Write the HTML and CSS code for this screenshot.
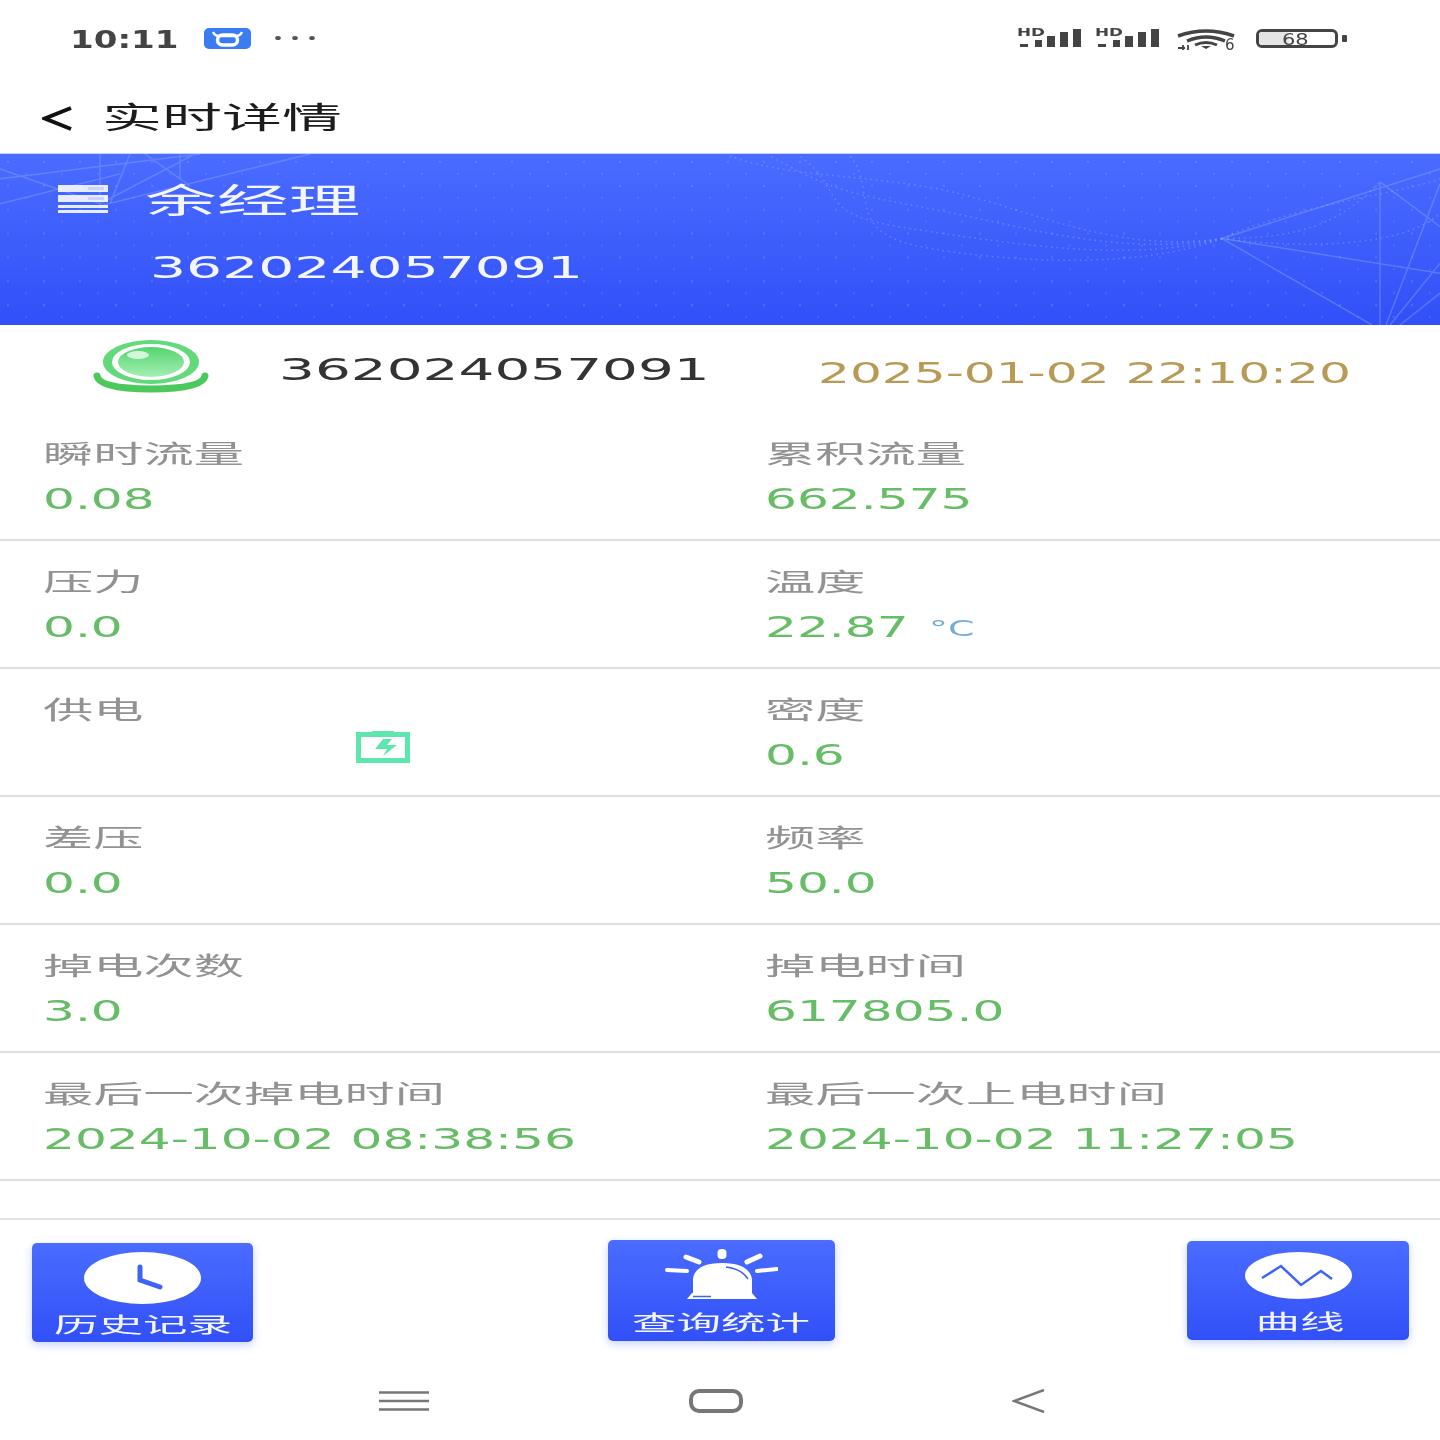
FILE: index.html
```html
<!DOCTYPE html>
<html lang="zh">
<head>
<meta charset="utf-8">
<title>实时详情</title>
<link rel="stylesheet" href="styles.css">
</head>
<body>
<div class="page">
  <header class="status">
    <div class="status-left">
      <span class="wide time">10:11</span>
      <svg class="app-icon" viewBox="0 0 47 21"><rect width="47" height="21" rx="5" fill="#3a7cf2"/><path d="M9 4q2 4 6 4h17q4 0 6-4" fill="none" stroke="#fff" stroke-width="2.500"/><rect x="13.500" y="7" width="20" height="10" rx="5" fill="none" stroke="#fff" stroke-width="3.500"/></svg>
      <svg class="dots" viewBox="0 0 40 6"><ellipse cx="3" cy="3" rx="2.800" ry="2"/><ellipse cx="20" cy="3" rx="2.800" ry="2"/><ellipse cx="37" cy="3" rx="2.800" ry="2"/></svg>
    </div>
    <div class="status-right">
      <svg class="signal" viewBox="0 0 65 20"><text x="0" y="9" class="hd" textLength="28" lengthAdjust="spacingAndGlyphs">HD</text><path d="M3 17h8v3H3zM18 13h7v7h-7zM30 9h8v11h-8zM43 5h8v15h-8zM56 2h8v18h-8z" fill="#444"/></svg>
      <svg class="signal" viewBox="0 0 65 20"><text x="0" y="9" class="hd" textLength="28" lengthAdjust="spacingAndGlyphs">HD</text><path d="M3 17h8v3H3zM18 13h7v7h-7zM30 9h8v11h-8zM43 5h8v15h-8zM56 2h8v18h-8z" fill="#444"/></svg>
      <svg class="wifi" viewBox="0 0 61 24"><path d="M1 9Q29-1 57 9" fill="none" stroke="#444" stroke-width="3.500"/><path d="M10 14Q29 6 48 14" fill="none" stroke="#444" stroke-width="3.500"/><path d="M18 18Q29 13 40 18" fill="none" stroke="#444" stroke-width="3"/><path d="M24 19h10l-5 3z" fill="#444"/><path d="M1 21h7M11 18v5M6 18v5" stroke="#444" stroke-width="1.800"/><text x="48" y="23" class="wifi-six">6</text></svg>
      <div class="battery"><span class="battery-fill"></span><span class="wide battery-num">68</span></div>
      <span class="battery-tip"></span>
    </div>
  </header>

  <div class="titlebar">
    <svg class="back" viewBox="0 0 31 25"><path d="M29 2 3 12.500 29 23" fill="none" stroke="#111" stroke-width="4"/></svg>
    <span class="wide title">实时详情</span>
  </div>

  <section class="banner">
    <svg class="banner-art" viewBox="0 0 1440 172" preserveAspectRatio="none">
      <defs><pattern id="dots" width="36" height="24" patternUnits="userSpaceOnUse"><circle cx="8" cy="8" r="1" fill="#8ea4ff" fill-opacity=".4"/><circle cx="26" cy="20" r="1" fill="#8ea4ff" fill-opacity=".3"/></pattern></defs>
      <rect width="1440" height="172" fill="url(#dots)"/>
      <g fill="none" stroke="#9fb2ff" stroke-opacity=".35" stroke-width="1.500">
        <path d="M0 15 100 50 195 0M0 50 120 20M100 0v55M130 0l-20 50M145 0l45 32M180 0v25M0 25 200 0 M100 52 310 0"/>
        <path d="M1222 85 1440 15M1222 85 1440 120M1222 85 1372 172M1380 28v144M1380 28l60 45M1386 172 1440 30M1390 172 1440 110M1400 172 1440 140"/>
      </g>
      <g fill="none" stroke="#a9b9ff" stroke-opacity=".4" stroke-width="1.500" stroke-dasharray="1.500 4">
        <path d="M1222 85C1120 100 1040 60 960 40S790 25 730 2"/>
        <path d="M1222 85C1120 104 1020 72 930 55S830 35 770 2"/>
        <path d="M1222 85C1130 110 1010 90 910 75S850 40 800 2"/>
        <path d="M1222 85C1140 115 1020 110 930 95S880 40 850 2"/>
        <path d="M1222 85C1300 85 1340 70 1380 28M1222 85C1300 95 1400 95 1440 60M1222 85C1300 50 1400 40 1440 25"/>
      </g>
    </svg>
    <div class="banner-row">
      <svg class="server" viewBox="0 0 50 28"><path d="M0 0h50v7H0zM0 10h50v7H0zM0 20h50v3H0zM0 25h50v3H0z" fill="#fff" fill-opacity=".88"/><path d="M30 2h16v3H30zM30 12h16v3H30z" fill="#c8d3ff"/></svg>
      <span class="wide banner-name">余经理</span>
    </div>
    <span class="wide banner-id">362024057091</span>
  </section>

  <div class="device">
    <svg class="cam" viewBox="0 0 116 53"><defs><linearGradient id="camg" x1="0" y1="0" x2="0" y2="1"><stop offset="0" stop-color="#54d56f"/><stop offset="1" stop-color="#a5eeb3"/></linearGradient></defs><path d="M4 36Q6 49 58 49T112 36" fill="none" stroke="#4cc95b" stroke-width="7" stroke-linecap="round"/><ellipse cx="58" cy="22" rx="48" ry="22" fill="#62d97b"/><ellipse cx="58" cy="22" rx="39" ry="18" fill="#fff"/><ellipse cx="58" cy="22" rx="33" ry="15" fill="url(#camg)"/><ellipse cx="45" cy="15" rx="11" ry="4" fill="#d3f7db"/></svg>
    <span class="wide device-id">362024057091</span>
    <span class="wide device-time">2025-01-02 22:10:20</span>
  </div>

  <main class="grid">
    <div class="cell"><span class="wide label">瞬时流量</span><div class="value-row"><span class="wide value">0.08</span></div></div>
    <div class="cell"><span class="wide label">累积流量</span><div class="value-row"><span class="wide value">662.575</span></div></div>
    <div class="cell"><span class="wide label">压力</span><div class="value-row"><span class="wide value">0.0</span></div></div>
    <div class="cell"><span class="wide label">温度</span><div class="value-row"><span class="wide value">22.87</span><span class="wide unit">°C</span></div></div>
    <div class="cell"><span class="wide label">供电</span><div class="value-row"><svg class="power" viewBox="0 0 54 32"><path d="M16 0h22v3H16z" fill="#5fe6ae"/><rect x="2.500" y="3.500" width="49" height="26" fill="none" stroke="#5fe6ae" stroke-width="5"/><path d="M27 8h9l-5 6h10L27 25l4-7H19z" fill="#5fe6ae"/></svg></div></div>
    <div class="cell"><span class="wide label">密度</span><div class="value-row"><span class="wide value">0.6</span></div></div>
    <div class="cell"><span class="wide label">差压</span><div class="value-row"><span class="wide value">0.0</span></div></div>
    <div class="cell"><span class="wide label">频率</span><div class="value-row"><span class="wide value">50.0</span></div></div>
    <div class="cell"><span class="wide label">掉电次数</span><div class="value-row"><span class="wide value">3.0</span></div></div>
    <div class="cell"><span class="wide label">掉电时间</span><div class="value-row"><span class="wide value">617805.0</span></div></div>
    <div class="cell"><span class="wide label">最后一次掉电时间</span><div class="value-row"><span class="wide value">2024-10-02 08:38:56</span></div></div>
    <div class="cell"><span class="wide label">最后一次上电时间</span><div class="value-row"><span class="wide value">2024-10-02 11:27:05</span></div></div>
  </main>

  <div class="actions">
    <div class="action action-history">
      <svg class="action-icon" viewBox="0 0 117 52"><ellipse cx="58.500" cy="26" rx="58.500" ry="26" fill="#fff"/><path d="M56 15v13l20 7" fill="none" stroke="#3f63f5" stroke-width="5" stroke-linecap="round"/></svg>
      <span class="wide action-label">历史记录</span>
    </div>
    <div class="action action-query">
      <svg class="action-icon" viewBox="0 0 114 52"><g fill="none" stroke="#fff" stroke-linecap="round"><path d="M22 8l13 5M83 13l13-6" stroke-width="5"/><path d="M3 21l20 1M93 22l20-2" stroke-width="4"/></g><g fill="#fff"><rect x="53.500" y="0" width="9" height="10" rx="4"/><path d="M29 44V30Q31 14 58 14T88 30V44z"/><path d="M23 50l5-6h60l5 6z"/></g><path d="M62 18Q78 20 84 30M29 47.500H47" fill="none" stroke="#3f63f5" stroke-width="1.500"/></svg>
      <span class="wide action-label action-label-query">查询统计</span>
    </div>
    <div class="action action-curve">
      <svg class="action-icon" viewBox="0 0 107 47"><ellipse cx="53.500" cy="23.500" rx="53.500" ry="23.500" fill="#fff"/><path d="M17 26 36 14 56 33 76 19 87 27" fill="none" stroke="#3f63f5" stroke-width="2.500"/></svg>
      <span class="wide action-label action-label-short">曲线</span>
    </div>
  </div>

  <nav class="navbar">
    <svg class="nav-menu" viewBox="0 0 50 20"><path d="M0 1.500h50M0 10h50M0 18.500h50" stroke="#777" stroke-width="2.500"/></svg>
    <svg class="nav-home" viewBox="0 0 54 24"><rect x="2" y="2" width="50" height="20" rx="8" fill="none" stroke="#777" stroke-width="4"/></svg>
    <svg class="nav-back" viewBox="0 0 33 24"><path d="M32 1 2 12l30 11" fill="none" stroke="#777" stroke-width="2.500"/></svg>
  </nav>
</div>
</body>
</html>
```
FILE: styles.css
```css
* { box-sizing: border-box; }
html, body { margin: 0; background: #fff; }
.page {
  width: 1440px;
  height: 1440px;
  overflow: hidden;
  display: flex;
  flex-direction: column;
  font-family: "DejaVu Sans", "Noto Sans CJK SC", sans-serif;
  filter: blur(.45px);
}
.wide {
  display: inline-block;
  white-space: nowrap;
  transform-origin: left center;
}
.status {
  height: 75px;
  padding: 2px 93px 0 70px;
  display: flex;
  justify-content: space-between;
  align-items: center;
  flex: none;
}
.status-left, .status-right { display: flex; align-items: center; }
.time { font-size: 24px; line-height: 28px; width: 134px; color: #444; font-weight: 700; transform: scaleX(1.42); margin-top: 2px; }
.app-icon { width: 47px; height: 21px; margin-right: 24px; }
.dots { width: 40px; height: 6px; fill: #555; margin-top: -2px; }
.signal { width: 65px; height: 20px; margin: -4px 13px 0 0; overflow: visible; }
.hd { font: 700 10px "DejaVu Sans", sans-serif; fill: #444; }
.wifi { width: 61px; height: 24px; margin: 0 18px 0 4px; overflow: visible; }
.wifi-six { font: 15px "DejaVu Sans", sans-serif; fill: #444; }
.battery {
  width: 82px;
  height: 19px;
  border: 3px solid #444;
  border-radius: 6px;
  position: relative;
  display: flex;
  align-items: center;
}
.battery-fill { position: absolute; left: 0; top: 0; bottom: 0; width: 40%; background: #e4e4e4; border-radius: 3px; }
.battery-num { position: relative; margin: 3px 0 0 23px; font-size: 15px; line-height: 13px; color: #444; transform: scaleX(1.4); }
.battery-tip { width: 5px; height: 7px; background: #444; margin-left: 4px; border-radius: 1px; }

.titlebar {
  height: 78px;
  flex: none;
  padding: 8px 0 0 42px;
  display: flex;
  align-items: center;
}
.back { width: 31px; height: 25px; margin-right: 29px; }
.title { font-size: 30px; line-height: 40px; color: #1c1c1c; transform: scaleX(2); }

.banner {
  height: 172px;
  flex: none;
  position: relative;
  background: linear-gradient(#4a6cff, #3150f8);
  padding: 26px 0 0 58px;
  border-top: 1px solid #c6d2fb;
}
.banner-art { position: absolute; inset: 0; width: 100%; height: 100%; }
.banner-row { position: relative; display: flex; align-items: center; height: 42px; }
.server { width: 50px; height: 28px; margin-right: 37px; margin-top: -5px; }
.banner-name { font-size: 34px; line-height: 42px; color: #f4f6ff; transform: scaleX(2.11); }
.banner-id {
  position: relative;
  display: block;
  margin: 24px 0 0 92px;
  font-size: 31px;
  line-height: 42px;
  color: #f4f6ff;
  transform: scaleX(1.83);
}

.device {
  height: 88px;
  flex: none;
  padding-left: 93px;
  display: flex;
  align-items: center;
}
.cam { width: 116px; height: 53px; margin: -5px 70px 0 0; flex: none; }
.device-id {
  width: 539px;
  flex: none;
  font-size: 31px;
  line-height: 40px;
  color: #333;
  transform: scaleX(1.82);
}
.device-time { font-size: 29px; line-height: 36px; color: #b99a55; transform: scaleX(1.73); margin-top: 8px; }

.grid { display: grid; grid-template-columns: 765px 1fr; flex: none; }
.cell { height: 128px; padding: 24px 0 0 43px; border-bottom: 2px solid #dedede; display: flex; flex-direction: column; }
.cell:nth-child(even) { padding-left: 0; }
.label { font-size: 25px; line-height: 36px; color: #929292; transform: scaleX(2.01); align-self: flex-start; }
.value-row { display: flex; align-items: center; height: 52px; gap: 81px; }
.value { font-size: 29px; line-height: 36px; color: #66bd66; transform: scaleX(1.73); }
.unit { font-size: 22px; line-height: 36px; color: #74addb; transform: scaleX(1.72); margin-top: 3px; }
.power { width: 54px; height: 32px; margin: -16px 0 0 313px; }

.actions {
  margin-top: 37px;
  height: 140px;
  flex: none;
  border-top: 2px solid #e2e2e2;
  padding: 0 31px 0 32px;
  display: flex;
  justify-content: space-between;
  align-items: flex-start;
}
.action {
  background: linear-gradient(#4a6cff, #3150f8);
  border-radius: 5px;
  box-shadow: 0 3px 8px rgba(70, 110, 255, .3);
  display: flex;
  flex-direction: column;
  align-items: center;
  color: #f4f6ff;
}
.action-history { width: 221px; height: 99px; margin-top: 23px; padding-top: 9px; }
.action-query { width: 227px; height: 101px; margin: 20px 0 0 2px; padding-top: 9px; }
.action-curve { width: 222px; height: 99px; margin-top: 21px; padding-top: 11px; }
.action-icon { width: 117px; height: 52px; flex: none; }
.action-query .action-icon { width: 114px; }
.action-curve .action-icon { width: 107px; height: 47px; }
.action-label {
  font-size: 21px;
  line-height: 30px;
  width: 88px;
  margin-top: 6px;
  transform: scaleX(2.12);
  transform-origin: center;
  text-align: center;
}
.action-label-query { margin-top: 7px; }
.action-label-short { width: 44px; margin: 8px 0 0 3px; }

.navbar {
  flex: 1;
  display: flex;
  align-items: center;
  padding: 3px 0 0 379px;
}
.nav-menu { width: 50px; height: 20px; margin-right: 260px; }
.nav-home { width: 54px; height: 24px; margin-right: 269px; }
.nav-back { width: 33px; height: 24px; }
```
